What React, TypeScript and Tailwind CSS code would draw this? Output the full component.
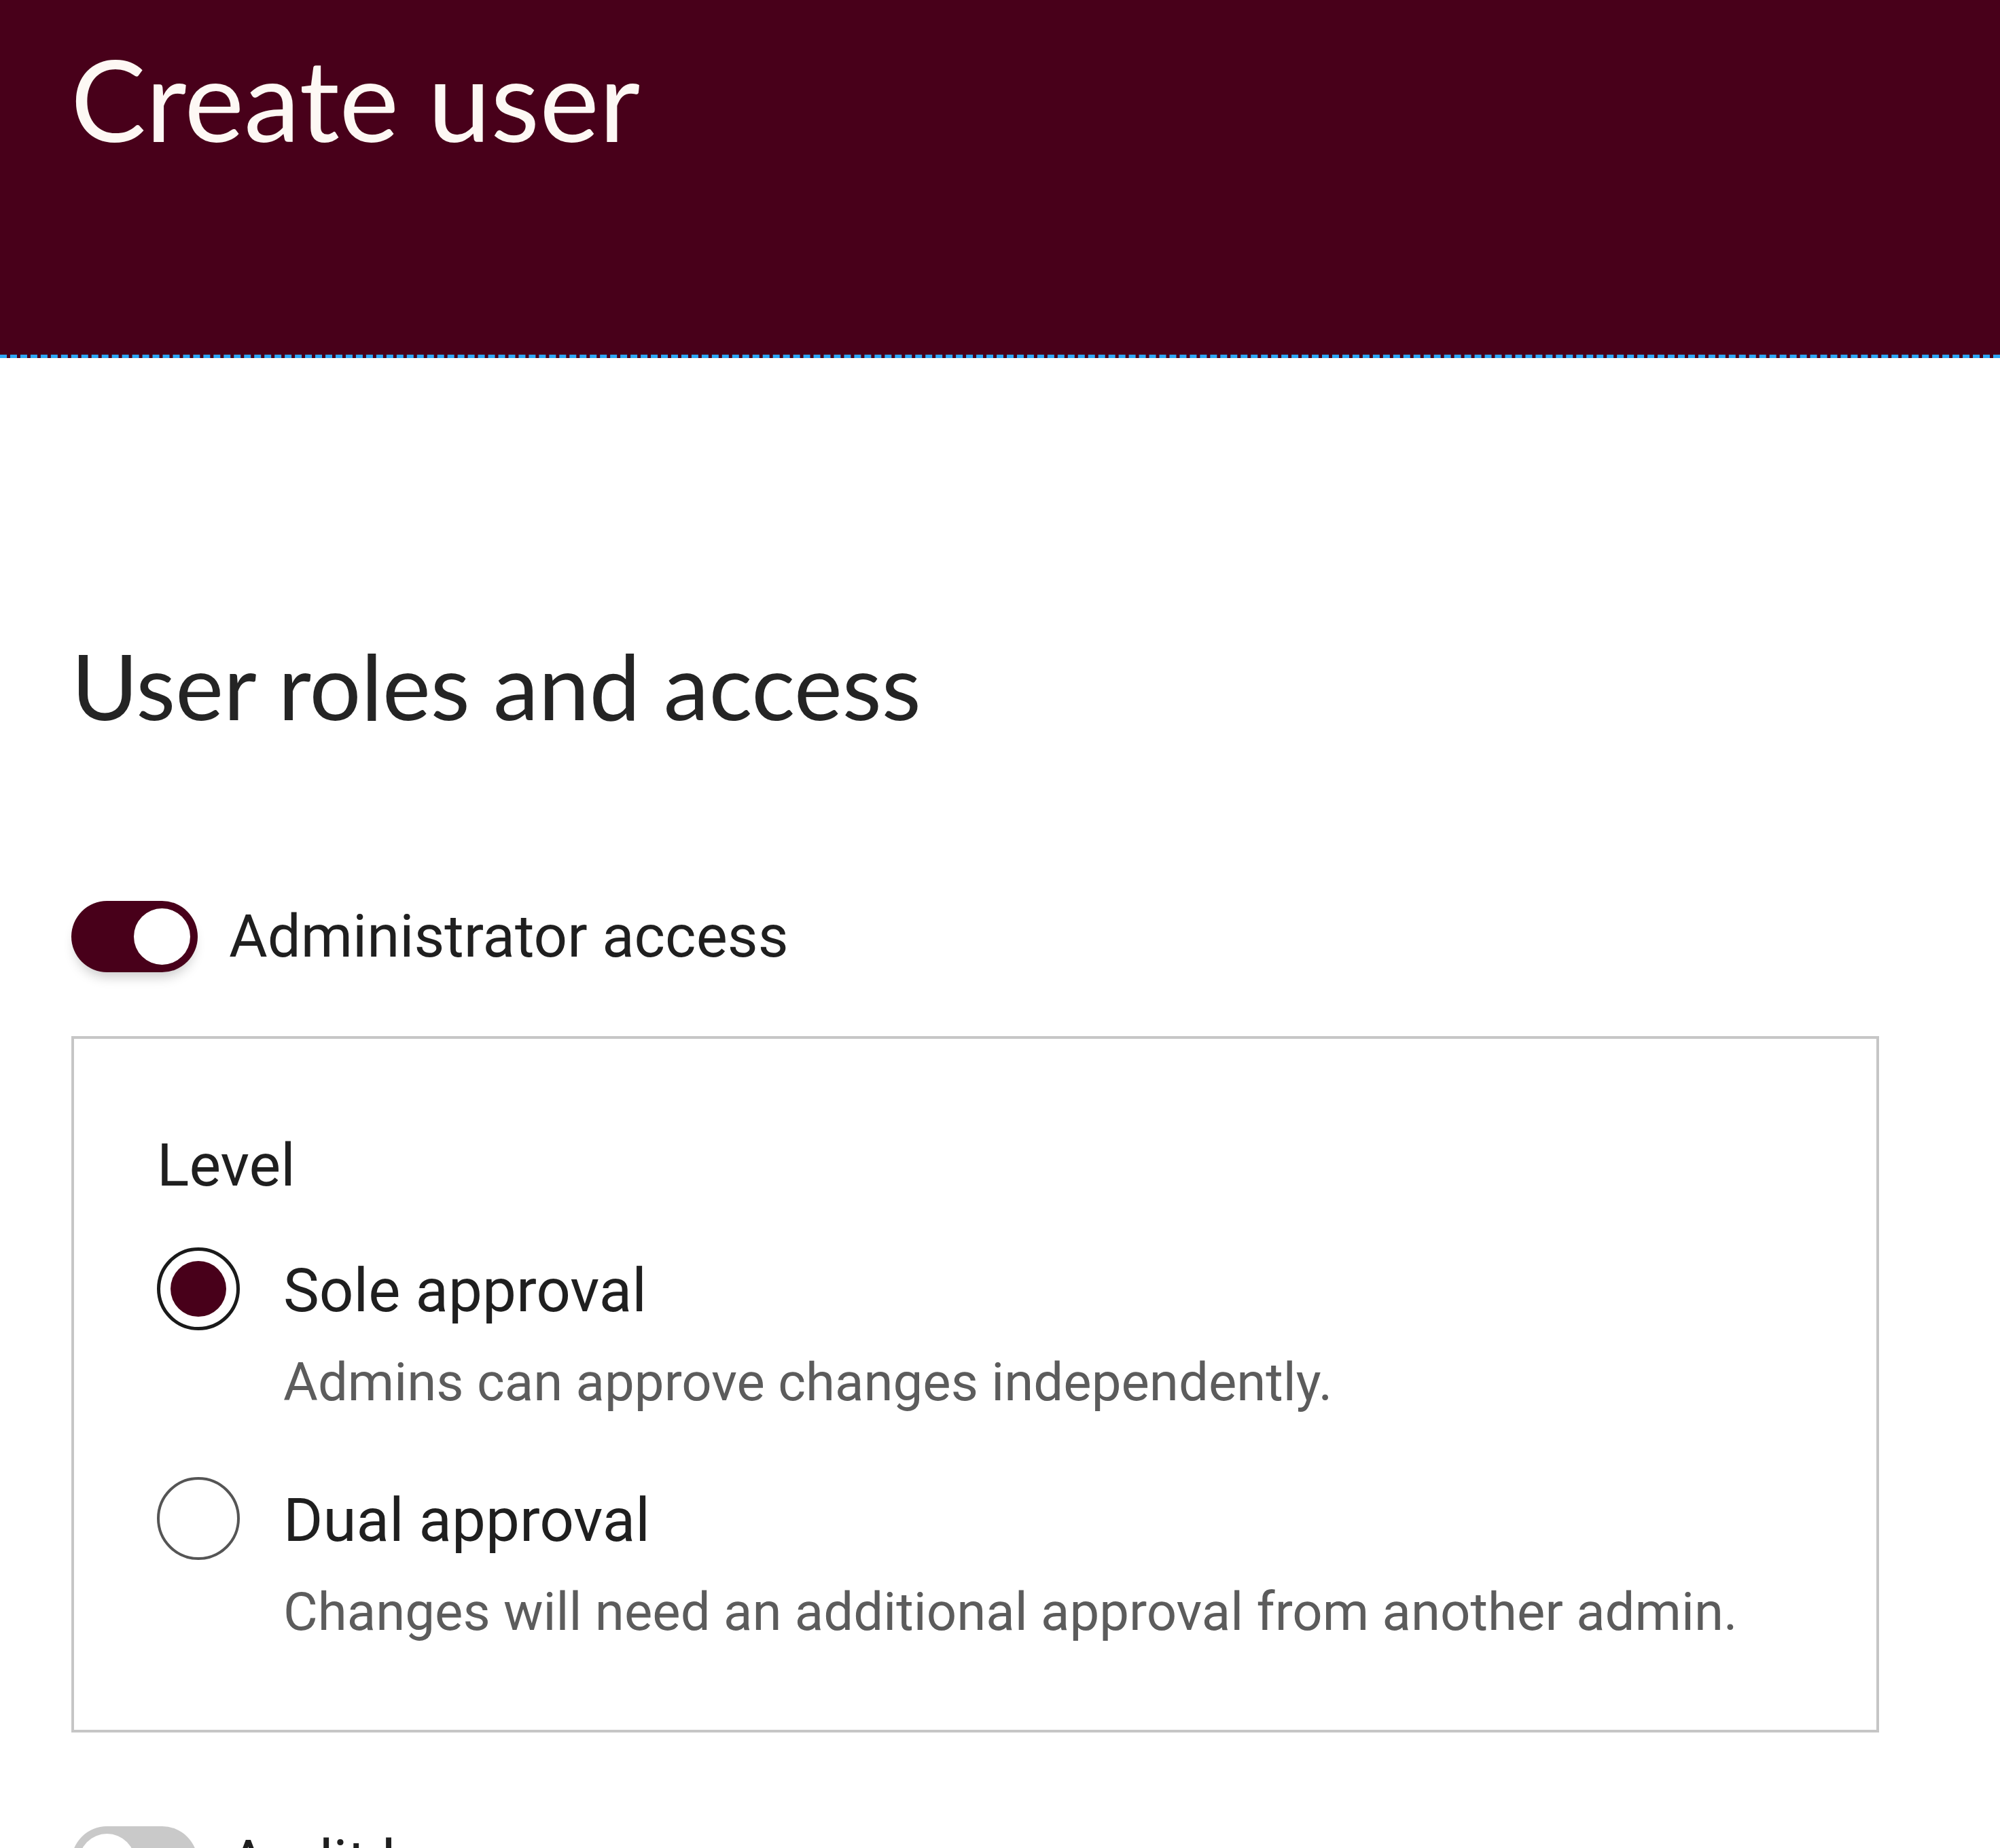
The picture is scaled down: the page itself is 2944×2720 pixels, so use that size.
const heading = { fontFamily: 'Lato, "Open Sans", sans-serif' }
const body = { fontFamily: 'Roboto, "Noto Sans", sans-serif' }

function Toggle({ on }: { on: boolean }) {
  return (
    <div
      className={
        'flex h-[105px] w-[186px] shrink-0 items-center rounded-full px-[11px] ' +
        (on
          ? 'justify-end bg-[#48001a] shadow-[0_12px_18px_-6px_rgba(0,0,0,0.22)]'
          : 'justify-start bg-[#c9c9c9]')
      }
    >
      <div className="h-[83px] w-[83px] rounded-full bg-white" />
    </div>
  )
}

function Radio({ checked }: { checked: boolean }) {
  return (
    <div
      className={
        'flex h-[122px] w-[122px] shrink-0 items-center justify-center rounded-full ' +
        (checked ? 'border-[5px] border-[#1a1a1a]' : 'border-[4px] border-[#555555]')
      }
    >
      {checked && <div className="h-[82px] w-[82px] rounded-full bg-[#48001a]" />}
    </div>
  )
}

function Option({ checked, label, hint }: { checked: boolean; label: string; hint: string }) {
  return (
    <div className="flex items-start gap-[64px]">
      <Radio checked={checked} />
      <div className="pt-[3px]">
        <div className="text-[89px] leading-[122px] text-[#1f1f1f]">{label}</div>
        <div className="mt-[35px] text-[78px] leading-none text-[#5c5c5c]">{hint}</div>
      </div>
    </div>
  )
}

export default function App() {
  return (
    <div className="min-h-screen bg-white" style={body}>
      <header className="h-[527px] border-b-[5px] border-dashed border-[#2ea8f5] bg-[#48001a] pl-[104px] pt-[62px]">
        <h1 className="text-[166px] font-normal leading-none text-[#fdf8f4]" style={heading}>
          Create user
        </h1>
      </header>

      <main className="pl-[105px] pr-[178px]">
        <h2 className="mt-[415px] text-[134px] font-normal leading-none text-[#242424]" style={heading}>
          User roles and access
        </h2>

        <div className="mt-[250px] flex items-center gap-[46px]">
          <Toggle on />
          <span className="text-[87px] leading-none text-[#1f1f1f]">Administrator access</span>
        </div>

        <div className="mt-[94px] border-[4px] border-[#c6c6c6] pb-[134px] pl-[122px] pt-[142px]">
          <div className="text-[88px] leading-none text-[#1f1f1f]">Level</div>
          <div className="mt-[77px] flex flex-col gap-[100px]">
            <Option checked label="Sole approval" hint="Admins can approve changes independently." />
            <Option
              checked={false}
              label="Dual approval"
              hint="Changes will need an additional approval from another admin."
            />
          </div>
        </div>

        <div className="mt-[138px] flex items-center gap-[46px] pb-[200px]">
          <Toggle on={false} />
          <span className="text-[87px] leading-none text-[#1f1f1f]">Audit log access</span>
        </div>
      </main>
    </div>
  )
}
